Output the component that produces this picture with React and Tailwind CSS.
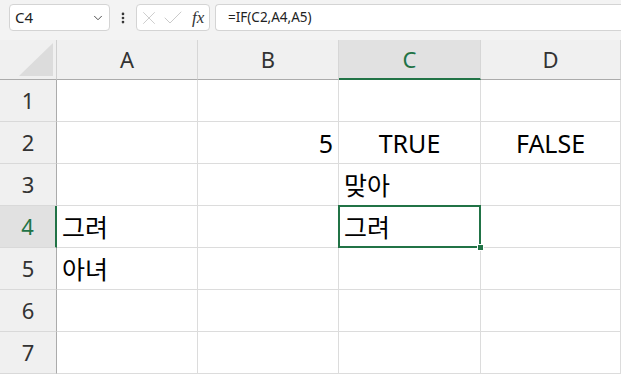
import React from 'react';
import { ChevronDown, EllipsisVertical, X, Check } from 'lucide-react';

const COLS = [
  { id: 'A', w: 'w-[141px]' },
  { id: 'B', w: 'w-[141px]' },
  { id: 'C', w: 'w-[142px]' },
  { id: 'D', w: 'flex-1' },
];

// cell text + alignment per row
const ROWS = [
  { n: 1, cells: [null, null, null, null] },
  { n: 2, cells: [null, ['5', 'right'], ['TRUE', 'center'], ['FALSE', 'center']] },
  { n: 3, cells: [null, null, ['맞아', 'left'], null] },
  { n: 4, cells: [['그려', 'left'], null, ['그려', 'left'], null] },
  { n: 5, cells: [['아녀', 'left'], null, null, null] },
  { n: 6, cells: [null, null, null, null] },
  { n: 7, cells: [null, null, null, null] },
];

const alignClass = {
  left: 'justify-start pl-[5px]',
  right: 'justify-end pr-[5px]',
  center: 'justify-center',
};

const font = { fontFamily: '"Noto Sans", "Noto Sans CJK KR", sans-serif' };

const App = () => {
  return (
    <div className="w-[621px] h-[374px] overflow-hidden bg-white select-none" style={font}>
      {/* Formula bar */}
      <div className="h-[40px] bg-[#f3f3f3] flex items-start pt-[4px] pl-[9px] gap-[5px]">
        <div className="w-[101px] h-[27px] bg-white border border-[#d4d4d4] rounded-[4px] flex items-center pl-[5px] pr-[4px]">
          <span className="flex-1 text-[15px] text-[#222]">C4</span>
          <ChevronDown className="w-[14px] h-[14px] text-[#444]" strokeWidth={1.6} />
        </div>
        <div className="w-[16px] h-[27px] flex items-center justify-center">
          <EllipsisVertical className="w-[14px] h-[16px] text-[#333]" strokeWidth={2.6} />
        </div>
        <div className="w-[74px] h-[27px] bg-white border border-[#d4d4d4] rounded-[4px] flex items-center pl-[1px]">
          <X className="w-[22px] h-[22px] text-[#c4c4c4]" strokeWidth={0.9} />
          <Check className="w-[24px] h-[24px] text-[#c4c4c4] ml-[1px]" strokeWidth={0.9} />
          <span className="text-[17px] italic text-[#333] leading-none ml-[7px]" style={{ fontFamily: '"Liberation Serif", serif' }}>
            fx
          </span>
        </div>
        <div className="flex-1 h-[27px] bg-white border border-[#d4d4d4] border-r-0 rounded-l-[4px] flex items-center pl-[12px]">
          <span className="text-[13.5px] text-[#222]">=IF(C2,A4,A5)</span>
        </div>
      </div>

      {/* Column headers */}
      <div className="flex h-[40px] bg-[#f0f0f0]">
        <div className="w-[57px] h-full border-r border-[#d0d0d0] border-b border-b-[#ababab] relative">
          <svg className="absolute left-0 top-0" width="57" height="40" viewBox="0 0 57 40">
            <polygon points="53,3 53,36 19,36" fill="#dcdcdc" />
          </svg>
        </div>
        {COLS.map((c) => {
          const sel = c.id === 'C';
          return (
            <div
              key={c.id}
              className={`${c.w} h-full flex items-center justify-center text-[22px] border-r border-[#d6d6d6] ${
                sel
                  ? 'bg-[#e1e1e1] text-[#217346] border-b-2 border-b-[#217346]'
                  : 'text-[#333] border-b border-b-[#ababab]'
              }`}
            >
              {c.id}
            </div>
          );
        })}
      </div>

      {/* Rows */}
      {ROWS.map((r) => {
        const selRow = r.n === 4;
        return (
          <div key={r.n} className="flex h-[42px]">
            <div
              className={`w-[57px] h-full flex items-center justify-center text-[22px] border-b border-[#d9d9d9] ${
                selRow
                  ? 'bg-[#e1e1e1] text-[#217346] border-r-2 border-r-[#217346]'
                  : 'bg-[#f0f0f0] text-[#333] border-r border-r-[#ababab]'
              }`}
            >
              {r.n}
            </div>
            {COLS.map((c, i) => {
              const cell = r.cells[i];
              const active = selRow && c.id === 'C';
              return (
                <div
                  key={c.id}
                  className={`${c.w} h-full relative flex items-end pb-[3px] border-r border-b border-[#dcdcdc] text-[25px] leading-[34px] text-black ${
                    cell ? alignClass[cell[1]] : ''
                  } ${active ? 'z-10' : ''}`}
                >
                  {cell && <span className="whitespace-nowrap">{cell[0]}</span>}
                  {active && (
                    <>
                      <div className="absolute -left-[1px] -top-[1px] -right-[1px] -bottom-[1px] border-2 border-[#217346]" />
                      <div className="absolute -right-[4px] -bottom-[4px] w-[7px] h-[7px] bg-[#217346] border border-white" />
                    </>
                  )}
                </div>
              );
            })}
          </div>
        );
      })}
    </div>
  );
};

export default App;
